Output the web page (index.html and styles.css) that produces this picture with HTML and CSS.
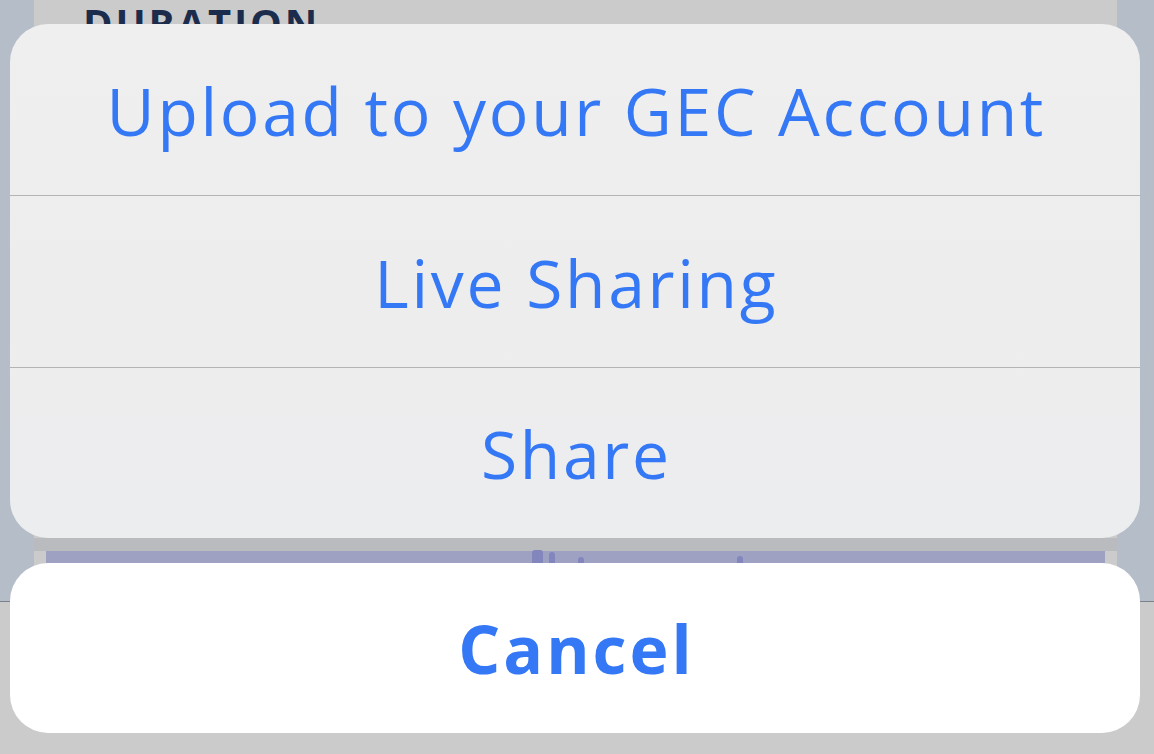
FILE: index.html
```html
<!DOCTYPE html>
<html lang="en">
<head>
<meta charset="utf-8">
<title>Action sheet</title>
<link rel="stylesheet" href="styles.css">
</head>
<body>
<div class="screen">
  <div class="backdrop">
    <div class="side side-left"></div>
    <div class="center">
      <h2 class="duration">DURATION</h2>
      <div class="spacer"></div>
      <div class="card-band"></div>
      <div class="chart">
        <span class="bar b1"></span>
        <span class="bar b2"></span>
        <span class="bar b3"></span>
        <span class="bar b4"></span>
      </div>
    </div>
    <div class="side side-right"></div>
  </div>

  <div class="sheet">
    <div class="group">
      <div class="action">Upload to your GEC Account</div>
      <div class="action">Live Sharing</div>
      <div class="action">Share</div>
    </div>
    <div class="cancel">Cancel</div>
  </div>
</div>
</body>
</html>
```

FILE: styles.css
```css
html, body {
  margin: 0;
  padding: 0;
}
body {
  width: 1154px;
  height: 754px;
  overflow: hidden;
  background: #cbcbcb;
  font-family: "Open Sans", "DejaVu Sans", sans-serif;
}
.screen {
  position: relative;
  width: 1154px;
  height: 754px;
}
.backdrop {
  display: flex;
  height: 601px;
  border-bottom: 1px solid #7c828b;
}
.side {
  background: #b5bdc8;
}
.side-left { width: 34px; }
.side-right { width: 37px; }
.center {
  flex: 1;
  display: flex;
  flex-direction: column;
  background: #cbcbcb;
}
.duration {
  margin: 0;
  padding: 0 0 0 49px;
  font-size: 40px;
  line-height: 40px;
  margin-top: 3px;
  font-weight: 700;
  color: #1b2c4c;
  letter-spacing: 2.8px;
}
.spacer { flex: 1; }
.card-band {
  height: 13px;
  background: #b9bbbf;
}
.chart {
  position: relative;
  height: 12px;
  margin: 0 12px;
  background: #9ea1c1;
  margin-bottom: 38px;
}
.bar {
  position: absolute;
  bottom: 0;
  width: 6px;
  background: #8386bd;
  border-radius: 3px 3px 0 0;
}
.b1 { left: 486px; width: 11px; height: 13px; }
.b2 { left: 503px; height: 11px; }
.b3 { left: 532px; height: 6px; }
.b4 { left: 691px; height: 7px; }

.sheet {
  position: absolute;
  top: 24px;
  left: 10px;
  width: 1130px;
  display: flex;
  flex-direction: column;
  gap: 25px;
}
.group {
  display: flex;
  flex-direction: column;
  border-radius: 38px;
  overflow: hidden;
  background: linear-gradient(180deg, #f0efef 0%, #eeedee 50%, #ecedef 100%);
}
.action {
  height: 171px;
  display: flex;
  align-items: center;
  justify-content: center;
  font-size: 66px;
  font-weight: 400;
  letter-spacing: 2.7px;
  padding-left: 2.7px;
  color: #3478f6;
  border-bottom: 1px solid #b4b4b6;
}
.action:last-child {
  height: 170px;
  border-bottom: none;
}
.cancel {
  height: 170px;
  display: flex;
  align-items: center;
  justify-content: center;
  background: #ffffff;
  border-radius: 38px;
  font-size: 66px;
  font-weight: 700;
  letter-spacing: 3px;
  padding-left: 3px;
  color: #3478f6;
}
```
